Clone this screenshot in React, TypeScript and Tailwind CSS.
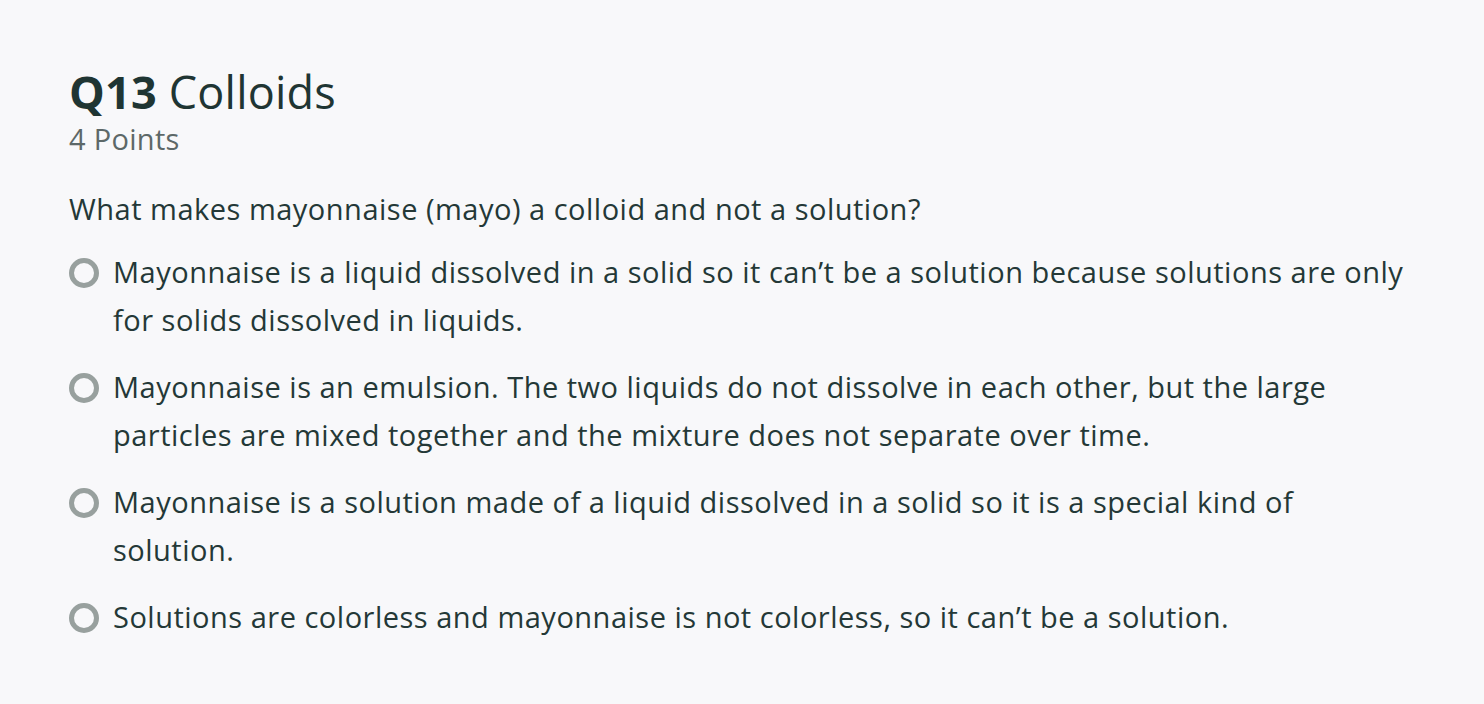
const options = [
  'Mayonnaise is a liquid dissolved in a solid so it can’t be a solution because solutions are only for solids dissolved in liquids.',
  'Mayonnaise is an emulsion. The two liquids do not dissolve in each other, but the large particles are mixed together and the mixture does not separate over time.',
  'Mayonnaise is a solution made of a liquid dissolved in a solid so it is a special kind of solution.',
  'Solutions are colorless and mayonnaise is not colorless, so it can’t be a solution.',
];

export default function App() {
  return (
    <div
      className="min-h-[704px] w-full bg-[#f8f8fa] pl-[69px] pt-[63px] text-[#243837]"
      style={{ fontFamily: '"Proxima Nova", "Open Sans", sans-serif' }}
    >
      <h2 className="text-[45px] leading-[58px] tracking-[0.2px] text-[#1f3533]">
        <span className="font-bold">Q13</span> Colloids
      </h2>
      <div className="text-[29px] leading-[36px] tracking-[0.3px] text-[#5d6868]">4 Points</div>

      <p className="mt-[30px] text-[29px] leading-[44px] tracking-[0.5px]">
        What makes mayonnaise (mayo) a colloid and not a solution?
      </p>

      <div className="mt-[17px] flex w-[1346px] flex-col gap-[19px]">
        {options.map(opt => (
          <label key={opt} className="flex cursor-pointer items-start gap-[14px]">
            <span className="mt-[10px] box-border h-[30px] w-[30px] shrink-0 rounded-full border-[5px] border-[#98a09e]" />
            <span className="text-[29px] leading-[48px] tracking-[0.5px]">{opt}</span>
          </label>
        ))}
      </div>
    </div>
  );
}
